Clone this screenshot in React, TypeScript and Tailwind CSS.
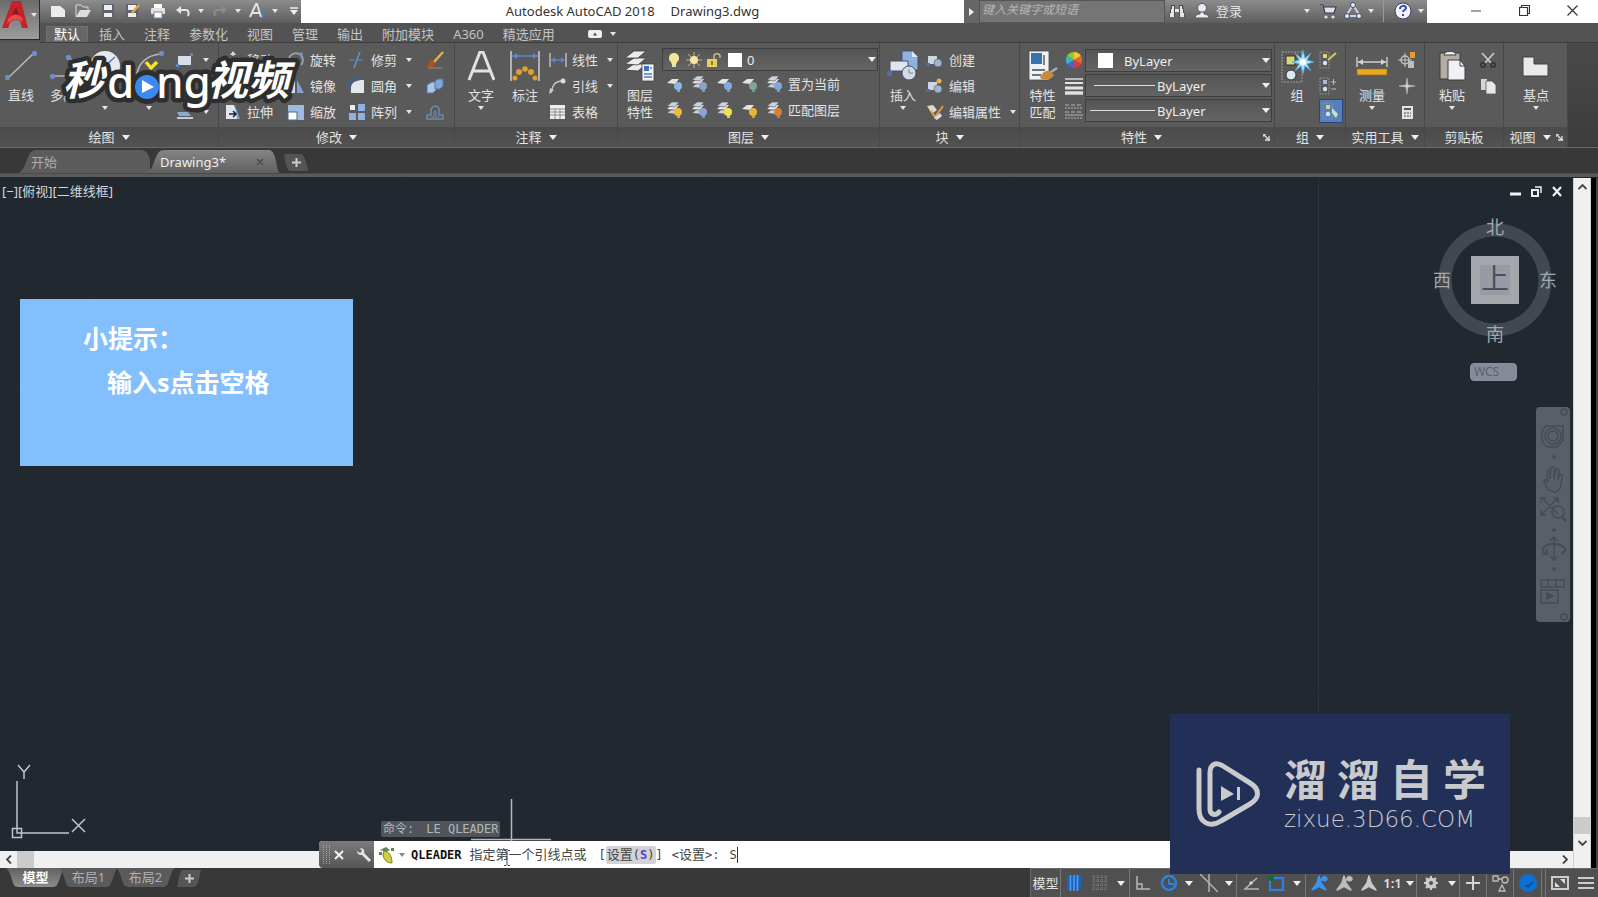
import React from 'react';
import clsx from 'clsx';

interface IconProps {
  w?: number;
  h?: number;
  children: React.ReactNode;
}

const Icon: React.FC<IconProps> = ({ w = 18, h = w, children }) => (
  <svg width={w} height={h} viewBox={`0 0 ${w} ${h}`} fill="none" className="shrink-0" aria-hidden="true">
    {children}
  </svg>
);

const Caret: React.FC<{ big?: boolean }> = ({ big }) =>
  big ? (
    <Icon w={8} h={5}><path d="M0 0h8L4 5z" fill="#eee" /></Icon>
  ) : (
    <Icon w={6} h={4}><path d="M0 0h6L3 4z" fill="#e4e4e4" /></Icon>
  );

// ---------- large ribbon icons ----------
const LineIcon = () => (
  <Icon w={32}>
    <path d="M3 28 29 3" stroke="#b8b8b8" strokeWidth="1.6" />
    <rect x="0" y="25" width="5" height="5" rx="2" fill="#6c8fc9" />
    <rect x="27" y="1" width="5" height="5" rx="2" fill="#6c8fc9" />
  </Icon>
);
const PolylineIcon = () => (
  <Icon w={32}>
    <path d="M5 26h16c8 0 8-16 1-18" stroke="#b8b8b8" strokeWidth="1.6" />
    <rect x="3" y="24" width="5" height="5" rx="2" fill="#6c8fc9" />
    <rect x="19" y="5" width="5" height="5" rx="2" fill="#6c8fc9" />
  </Icon>
);
const CircleIcon = () => (
  <Icon w={32}>
    <circle cx="16" cy="16" r="15" fill="#e6e8ec" />
    <path d="M16 16 26 7" stroke="#5578b5" strokeWidth="1.5" />
    <rect x="14" y="14" width="4" height="4" fill="#5578b5" />
  </Icon>
);
const ArcIcon = () => (
  <Icon w={32}>
    <path d="M3 28C5 13 14 5 28 4" stroke="#b8b8b8" strokeWidth="1.6" />
    <rect x="1" y="26" width="5" height="5" rx="2" fill="#6c8fc9" />
    <rect x="26" y="1" width="5" height="5" rx="2" fill="#6c8fc9" />
  </Icon>
);
const TextIcon = () => (
  <Icon w={28} h={30}>
    <path d="M2 29 13 1h3l11 28M6 20h17" stroke="#e2e2e2" strokeWidth="3" />
  </Icon>
);
const DimensionIcon = () => (
  <Icon w={32}>
    <path d="M2 1v30M30 1v30" stroke="#c9c9c9" strokeWidth="1.6" />
    <path d="M3 6h26" stroke="#5b86cc" strokeWidth="1.6" />
    <path d="m3 6 5-3v6zM29 6l-5-3v6z" fill="#5b86cc" />
    <g fill="#dda02c">
      <circle cx="6" cy="28" r="2.500" /><circle cx="10" cy="22" r="3" /><circle cx="16" cy="19" r="2.800" />
      <circle cx="22" cy="22" r="3" /><circle cx="26" cy="28" r="2.500" />
    </g>
  </Icon>
);
const LayerPropsIcon = () => (
  <Icon w={32}>
    <g fill="#ececec" stroke="#3d3d3d" strokeWidth=".8">
      <path d="m1 20 9-6h12l-8 7z" /><path d="m1 14 9-6h12l-8 7z" /><path d="m1 8 9-7h12l-8 7z" />
    </g>
    <rect x="18" y="14" width="12" height="17" fill="#f1f3f6" stroke="#444" strokeWidth=".8" />
    <rect x="20" y="16" width="5" height="5" fill="#3f70b8" />
    <path d="M20 24h8M20 27h8M26 18h2" stroke="#5a7fb9" strokeWidth="1.4" />
  </Icon>
);
const InsertIcon = () => (
  <Icon w={32}>
    <path d="M15 1h10l6 6v13H15z" fill="#8fb2df" stroke="#43536e" /><path d="M25 1v6h6" fill="#dfe9f6" />
    <path d="M3 11h18v10H3z" fill="#dfe5ee" stroke="#43536e" />
    <circle cx="22" cy="23" r="7" fill="#d3dae5" stroke="#43536e" />
    <path d="M22 23v-4M22 23h4" stroke="#7c8797" />
    <rect x="0" y="21" width="5" height="5" fill="#4b70b2" />
  </Icon>
);
const MatchIcon = () => (
  <Icon w={32}>
    <rect x="2" y="1" width="20" height="29" fill="#f0f1f3" stroke="#4d4d4d" strokeWidth=".8" />
    <rect x="4" y="3" width="11" height="11" fill="#3572b0" />
    <path d="M17 5v10M5 20h13M5 25h9" stroke="#3d4a5b" strokeWidth="1.3" />
    <path d="M13 28c2-6 6-8 10-7l4 4c-3 5-8 6-14 3z" fill="#c98a3d" />
    <path d="m24 22 6-4" stroke="#a9adb3" strokeWidth="2.4" />
  </Icon>
);
const GroupIcon = () => (
  <Icon w={34}>
    <rect x="2" y="3" width="20" height="30" stroke="#9b9b9b" strokeDasharray="2 1" />
    <rect x="6" y="7" width="9" height="9" fill="#d8d775" stroke="#333" />
    <circle cx="11" cy="26" r="5" fill="#dce9ef" stroke="#333" />
    <path d="m23 1 2 8 6-5-4 7 7 2-7 2 4 7-6-5-2 8-2-8-6 5 4-7-7-2 7-2-4-7 6 5z" fill="#a9e0fb" stroke="#4aa3dc" strokeWidth=".8" />
    <circle cx="23" cy="13" r="3" fill="#fff" />
  </Icon>
);
const MeasureIcon = () => (
  <Icon w={32}>
    <path d="M1 7v10M31 7v10M2 12h28" stroke="#d0d0d0" strokeWidth="1.4" />
    <path d="m2 12 5-3v6zM30 12l-5-3v6z" fill="#d0d0d0" />
    <rect x="1" y="19" width="30" height="6" fill="#e8a81f" stroke="#8e6a1c" strokeWidth=".6" />
  </Icon>
);
const PasteIcon = () => (
  <Icon w={30} h={34}>
    <rect x="3" y="4" width="20" height="26" rx="1" fill="#b7aca0" stroke="#3c3c3c" />
    <path d="M7 6c0-5 12-5 12 0z" fill="#ececec" stroke="#3c3c3c" />
    <path d="M11 11h12l5 6v14H11z" fill="#f0f1f4" stroke="#3c3c3c" />
    <path d="M23 11v6h5" stroke="#3c3c3c" />
  </Icon>
);
const BaseIcon = () => (
  <Icon w={30} h={26}>
    <path d="M2 4h11v7h14v12H2z" fill="#e9eaec" stroke="#404040" />
  </Icon>
);

// ---------- small ribbon icons ----------
const RectIcon = () => (
  <Icon><rect x="2" y="5" width="13" height="9" fill="#d8dde6" /><rect x="14" y="2" width="3" height="3" fill="#5d86c8" /><rect x="0" y="13" width="3" height="3" fill="#5d86c8" /></Icon>
);
const EllipseIcon = () => (
  <Icon><ellipse cx="9" cy="9" rx="8" ry="5" stroke="#c8c8c8" strokeWidth="1.5" /><circle cx="9" cy="9" r="2" fill="#5d86c8" /></Icon>
);
const HatchIcon = () => (
  <Icon><path d="M1 9h11l3 4H3z" fill="#8fa7cd" /><path d="M1 15h16" stroke="#c2cde0" strokeWidth="2" /></Icon>
);
const MoveIcon = () => (
  <Icon><path d="M9 2v14M2 9h14" stroke="#c6c6c6" strokeDasharray="3 2" strokeWidth="1.5" /><path d="m9 0 3 4H6zM0 9l4-3v6zM18 9l-4-3v6zM9 18l3-4H6z" fill="#d8d8d8" /></Icon>
);
const CopyIcon = () => (
  <Icon><circle cx="6" cy="6" r="4" stroke="#c8c8c8" strokeWidth="1.5" /><circle cx="12" cy="11" r="4" fill="#7fa1d3" /></Icon>
);
const StretchIcon = () => (
  <Icon><path d="M2 2h8l5 14H2z" fill="#dfe6f0" /><path d="M11 2 16 16h-3z" fill="#7fa1d3" /><path d="M5 11h7M9 8l3 3-3 3" stroke="#222" strokeWidth="1.5" /></Icon>
);
const RotateIcon = () => (
  <Icon><path d="M5 15A7 7 0 1 1 14 14" stroke="#9c9c9c" strokeWidth="2" /><circle cx="14" cy="3" r="2" fill="#6c8fc9" /><circle cx="3" cy="14" r="2" fill="#6c8fc9" /></Icon>
);
const MirrorIcon = () => (
  <Icon><path d="M8 3v13H1z" fill="#d9dce2" /><path d="M10 3v13h7z" fill="#7fa1d3" /></Icon>
);
const ScaleIcon = () => (
  <Icon><rect x="1" y="2" width="16" height="15" fill="#9dbae2" /><rect x="1" y="9" width="9" height="8" fill="#fff" stroke="#536681" /></Icon>
);
const TrimIcon = () => (
  <Icon><path d="M1 9h16" stroke="#4f7cb9" strokeWidth="1.6" strokeDasharray="6 2" /><path d="M12 1 6 17" stroke="#7490b0" strokeWidth="1.6" /></Icon>
);
const FilletIcon = () => (
  <Icon><path d="M3 16V10c1-5 5-7 13-7v13z" fill="#e5e7ea" /><path d="M1 12C1 5 5 1 12 1" stroke="#2d67a8" strokeWidth="1.6" /></Icon>
);
const ArrayIcon = () => (
  <Icon><rect x="2" y="2" width="5" height="5" fill="#eee" /><rect x="10" y="1" width="7" height="7" fill="#8fb1e2" /><rect x="1" y="10" width="7" height="7" fill="#8fb1e2" /><rect x="10" y="10" width="7" height="7" fill="#8fb1e2" /></Icon>
);
const EraseIcon = () => (
  <Icon><path d="M17 1 8 11" stroke="#e8b04a" strokeWidth="2.5" /><path d="m5 8 5 5-5 4-4-1z" fill="#b0501f" /><path d="M2 17h15" stroke="#8c8c8c" /></Icon>
);
const ExplodeIcon = () => (
  <Icon><path d="m1 8 5-3h5v7l-4 4H1z" fill="#a9c6ea" stroke="#56779f" /><path d="M9 4l3-2h5v7l-3 3H9z" fill="#7fa6d8" stroke="#56779f" /></Icon>
);
const OffsetIcon = () => (
  <Icon><path d="M1 16v-4h4V7c1-5 8-5 8 0v5h4v4z" stroke="#6d89ad" strokeWidth="1.5" /><path d="M5 14h8M8 13V8h2v5" stroke="#6d89ad" /></Icon>
);
const LinearIcon = () => (
  <Icon><path d="M1 2v14M17 2v14" stroke="#c9c9c9" strokeWidth="1.3" /><path d="M2 9h14" stroke="#5b86cc" strokeWidth="1.4" /><path d="m2 9 4-3v6zM16 9l-4-3v6z" fill="#5b86cc" /></Icon>
);
const LeaderIcon = () => (
  <Icon><path d="M2 16C4 8 5 5 12 4" stroke="#c9c9c9" strokeWidth="1.4" /><path d="m0 17 1-6 4 2z" fill="#c9c9c9" /><circle cx="14" cy="4" r="2.5" fill="#dcdcdc" /></Icon>
);
const TableIcon = () => (
  <Icon><rect x="1" y="2" width="15" height="14" fill="#ededed" /><path d="M1 6h15M1 9h15M1 12h15M6 6v10M11 6v10" stroke="#8a8a8a" /></Icon>
);

const LayerTool: React.FC<{ dot: string; stack?: boolean }> = ({ dot, stack }) => (
  <Icon>
    <path d="m1 8 5-4h7l-4 5z" fill="#e3e3e3" />
    {stack && <path d="m1 5 5-4h7l-4 5zM1 12l4-3h7l-4 4z" fill="#c9d2df" stroke="#555" strokeWidth=".6" />}
    <circle cx="12" cy="11" r="4" fill={dot} />
    <path d="M11 13h3v4h-3z" fill={dot} opacity=".8" />
  </Icon>
);

const BlockIcon: React.FC<{ accent: string }> = ({ accent }) => (
  <Icon>
    <path d="M2 5h9v8H2z" fill="#ccd6e4" />
    <circle cx="12" cy="12" r="4" fill="#9fb4d3" stroke="#555" strokeWidth=".6" />
    <rect x="0" y="12" width="4" height="3" fill="#4b70b2" />
    <circle cx="13" cy="4" r="2.5" fill={accent} />
  </Icon>
);
const AttrIcon = () => (
  <Icon><path d="m1 3 6-1 4 5-5 4z" fill="#e5d6c4" /><path d="m5 8 4 6 8-11" stroke="#e59b4c" strokeWidth="2" /><path d="m8 15 6-5 2 3-5 4z" fill="#d9dce2" /></Icon>
);
const WheelIcon = () => (
  <Icon>
    <path d="M9 9V1a8 8 0 0 1 7 4z" fill="#f0c92c" /><path d="m9 9 7-4a8 8 0 0 1 0 8z" fill="#e8662e" />
    <path d="m9 9 7 4a8 8 0 0 1-7 4z" fill="#d23c4f" /><path d="M9 9v8a8 8 0 0 1-7-4z" fill="#4c62d6" />
    <path d="m9 9-7 4a8 8 0 0 1 0-8z" fill="#36b7c8" /><path d="M9 9 2 5a8 8 0 0 1 7-4z" fill="#8cc63f" />
  </Icon>
);
const WeightIcon = () => (
  <Icon><path d="M0 2h18" stroke="#e2e2e2" strokeWidth="1.4" /><path d="M0 6h18" stroke="#e2e2e2" strokeWidth="2" /><path d="M0 11h18" stroke="#e2e2e2" strokeWidth="3" /><path d="M0 16h18" stroke="#e2e2e2" strokeWidth="3.4" /></Icon>
);
const TypeIcon = () => (
  <Icon><path d="M0 2h18M0 9h18" stroke="#b5b5b5" strokeDasharray="4 2" /><path d="M0 5h18M0 15h18" stroke="#b5b5b5" strokeDasharray="2 1" /><path d="M0 12h18" stroke="#b5b5b5" /></Icon>
);
const GroupTool: React.FC<{ kind: 'edit' | 'ungroup' | 'select' }> = ({ kind }) => (
  <Icon>
    <rect x="1" y="1" width="9" height="16" stroke="#8f8f8f" strokeDasharray="2 1" />
    <rect x="4" y="3" width="4" height="4" fill={kind === 'ungroup' ? '#a9bcd6' : '#d8d775'} />
    <circle cx="6" cy="12" r="2.2" fill="#d5e4ee" />
    {kind === 'edit' && <path d="m9 9 8-7" stroke="#d5c95a" strokeWidth="2" />}
    {kind === 'ungroup' && <path d="M12 5h5M14.500 2v6M12 12h5" stroke="#bbb" />}
    {kind === 'select' && <path d="m10 6 6 6-2 4-4-5z" fill="#cfe0b4" />}
  </Icon>
);
const QuickSelectIcon = () => (
  <Icon><circle cx="7" cy="9" r="4" stroke="#c4c4c4" strokeWidth="1.5" /><path d="M7 2v14M0 9h14" stroke="#c4c4c4" /><rect x="12" y="1" width="5" height="6" fill="#e69a35" /><rect x="10" y="10" width="6" height="7" fill="#bdbdbd" /></Icon>
);
const PointIcon = () => (
  <Icon><path d="m9 1 1 7 7 1-7 1-1 7-1-7-7-1 7-1z" fill="#d2d2d2" stroke="#bcbcbc" strokeWidth=".6" /></Icon>
);
const CalcIcon = () => (
  <Icon><rect x="4" y="3" width="11" height="13" fill="#e4e4e4" /><path d="M6 6h7" stroke="#555" strokeWidth="2" /><path d="M6 10h7M6 13h7" stroke="#777" strokeWidth="1.4" strokeDasharray="2 1" /></Icon>
);
const CutIcon = () => (
  <Icon><path d="m3 2 9 10M15 2 6 12" stroke="#c9c9c9" strokeWidth="1.8" /><circle cx="4" cy="14" r="2.2" stroke="#333" strokeWidth="1.5" /><circle cx="14" cy="14" r="2.200" stroke="#333" strokeWidth="1.5" /></Icon>
);
const CopyClipIcon = () => (
  <Icon><path d="M2 2h6v11H2z" fill="#d5d5d5" /><path d="M7 4h6l4 4v9H7z" fill="#e8e8e8" stroke="#555" strokeWidth=".8" /></Icon>
);

// ---------- ribbon building blocks ----------
const Panel: React.FC<{
  title: string;
  width: string;
  menu?: boolean;
  launcher?: boolean;
  children: React.ReactNode;
}> = ({ title, width, menu = true, launcher, children }) => (
  <section className={clsx('flex shrink-0 flex-col border-r border-[#484848]', width)}>
    <div className="flex h-[84px] bg-[#5a5a5a] pt-1">{children}</div>
    <div className="flex h-[20px] items-center bg-linear-to-b from-[#4b4b4b] to-[#525252]">
      <button className="flex flex-1 items-center justify-center gap-[7px] leading-[17px]">
        {title}
        {menu && <Caret big />}
      </button>
      {launcher && (
        <button aria-label={`${title} 设置`} className="mr-1">
          <Icon w={7}><path d="M0 0h3M0 0v3M1 1l4 4M6 2v5M2 6h5" stroke="#ddd" strokeWidth="1.3" /></Icon>
        </button>
      )}
    </div>
  </section>
);

const Large: React.FC<{ icon: React.ReactNode; lines?: string[]; name?: string; width: string; menu?: boolean }> = ({
  icon,
  lines,
  name,
  width,
  menu,
}) => (
  <button aria-label={name} className={clsx('flex shrink-0 flex-col items-center whitespace-nowrap leading-[17px]', width)}>
    <span className="mb-[2px] flex h-[38px] items-center">{icon}</span>
    {lines ? lines.map((l) => <span key={l}>{l}</span>) : <span className="h-[17px]" />}
    {menu && <span className="flex h-2 items-center"><Caret /></span>}
  </button>
);

const Small: React.FC<{ icon: React.ReactNode; label?: string; menu?: boolean; name?: string }> = ({
  icon,
  label,
  menu,
  name,
}) => (
  <button aria-label={label ?? name} className="flex h-[26px] items-center gap-[5px] leading-[17px] whitespace-nowrap">
    {icon}
    {label}
    {menu && <span className="ml-1"><Caret /></span>}
  </button>
);

const Combo: React.FC<{ label: string; value: string; children?: React.ReactNode }> = ({ label, value, children }) => (
  <label className="flex h-[23px] items-center border border-[#3e3e3e] bg-linear-to-b from-[#555] to-[#646464] pr-px">
    {children}
    <select aria-label={label} className="min-w-0 flex-1 appearance-none bg-transparent text-[#eee] outline-none">
      <option>{value}</option>
    </select>
    <Caret big />
  </label>
);

const layerRows = [
  { label: '置为当前', tools: [['关', '#8fb6dd', 0], ['隔离', '#8aa3c2', 1], ['冻结', '#86a8e0', 0], ['锁定', '#7fa596', 0], ['当前', '#7fa8d8', 1]] },
  { label: '匹配图层', tools: [['打开', '#f0b840', 1], ['取消隔离', '#8aa3d2', 1], ['解冻', '#f3de4d', 1], ['解锁', '#e5b43a', 0], ['匹配', '#cf8238', 1]] },
] as const;

const Ribbon = () => (
  <div className="flex h-[105px] overflow-hidden border-b border-[#6a6a6a] bg-linear-to-b from-[#4a4a4a] to-[#3c3c3c]">
    <Panel title="绘图" width="w-[219px]">
      <Large width="w-[42px]" icon={<LineIcon />} lines={['直线']} />
      <Large width="w-[42px]" icon={<PolylineIcon />} lines={['多段']} />
      <Large width="w-[42px]" icon={<CircleIcon />} name="圆" menu />
      <Large width="w-[46px]" icon={<ArcIcon />} name="圆弧" menu />
      <div className="pl-1">
        <Small name="矩形" icon={<RectIcon />} menu />
        <Small name="椭圆" icon={<EllipseIcon />} menu />
        <Small name="图案填充" icon={<HatchIcon />} menu />
      </div>
    </Panel>
    <Panel title="修改" width="w-[236px]">
      <div className="grid grid-cols-[63px_61px_78px_auto] content-start pl-[5px]">
        <Small icon={<MoveIcon />} label="移动" />
        <Small icon={<RotateIcon />} label="旋转" />
        <Small icon={<TrimIcon />} label="修剪" menu />
        <Small icon={<EraseIcon />} name="删除" />
        <Small icon={<CopyIcon />} name="复制" />
        <Small icon={<MirrorIcon />} label="镜像" />
        <Small icon={<FilletIcon />} label="圆角" menu />
        <Small icon={<ExplodeIcon />} name="分解" />
        <Small icon={<StretchIcon />} label="拉伸" />
        <Small icon={<ScaleIcon />} label="缩放" />
        <Small icon={<ArrayIcon />} label="阵列" menu />
        <Small icon={<OffsetIcon />} name="偏移" />
      </div>
    </Panel>
    <Panel title="注释" width="w-[163px]">
      <Large width="w-[52px]" icon={<TextIcon />} lines={['文字']} menu />
      <Large width="w-[36px]" icon={<DimensionIcon />} lines={['标注']} />
      <div className="pl-[6px]">
        <Small icon={<LinearIcon />} label="线性" menu />
        <Small icon={<LeaderIcon />} label="引线" menu />
        <Small icon={<TableIcon />} label="表格" />
      </div>
    </Panel>
    <Panel title="图层" width="w-[262px]">
      <Large width="w-[44px]" icon={<LayerPropsIcon />} lines={['图层', '特性']} />
      <div className="min-w-0 flex-1 pt-px pr-px">
        <Combo label="图层" value="0">
          <span className="mr-[5px] flex items-center gap-[3px] pl-[3px]">
            <Icon w={16}><path d="M8 1a5 5 0 0 0-3 9l1 3h4l1-3a5 5 0 0 0-3-9z" fill="#f8e49a" /><path d="M6 13h4v2H6z" fill="#d8d8d8" /></Icon>
            <Icon><path d="M9 1v16M1 9h16M3 3l12 12M15 3 3 15" stroke="#c7b48a" /><circle cx="9" cy="9" r="4" fill="#f8e6a4" /></Icon>
            <Icon w={16}><rect x="1" y="7" width="10" height="8" fill="#e9cf62" /><path d="M8 7V4c0-3 6-3 6 0v2" stroke="#c6b878" strokeWidth="1.5" /><path d="M6 9v4" stroke="#6a5a20" strokeWidth="1.5" /></Icon>
            <span className="ml-[3px] h-[14px] w-[14px] bg-white" />
          </span>
        </Combo>
        {layerRows.map((row) => (
          <div key={row.label} className="flex h-[26px] items-center gap-1 pl-1">
            <div className="flex gap-[7px]">
              {row.tools.map(([name, dot, stack]) => (
                <button key={name} aria-label={name}><LayerTool dot={dot} stack={!!stack} /></button>
              ))}
            </div>
            <button>{row.label}</button>
          </div>
        ))}
      </div>
    </Panel>
    <Panel title="块" width="w-[140px]">
      <Large width="w-[46px]" icon={<InsertIcon />} lines={['插入']} menu />
      <div>
        <Small icon={<BlockIcon accent="#5a5a5a" />} label="创建" />
        <Small icon={<BlockIcon accent="#e8b33c" />} label="编辑" />
        <Small icon={<AttrIcon />} label="编辑属性" menu />
      </div>
    </Panel>
    <Panel title="特性" width="w-[255px]" launcher>
      <Large width="w-[45px]" icon={<MatchIcon />} lines={['特性', '匹配']} />
      <div className="w-5">
        <Small icon={<WheelIcon />} name="对象颜色" />
        <Small icon={<WeightIcon />} name="线宽" />
        <Small icon={<TypeIcon />} name="线型" />
      </div>
      <div className="flex min-w-0 flex-1 flex-col gap-[2px] pt-[2px] pr-[2px]">
        <Combo label="对象颜色" value="ByLayer"><span className="mr-[11px] ml-3 h-[15px] w-[15px] bg-white" /></Combo>
        <Combo label="线宽" value="ByLayer"><span className="mr-[2px] ml-2 h-px w-[61px] bg-[#ddd]" /></Combo>
        <Combo label="线型" value="ByLayer"><span className="mr-[2px] ml-1 h-px w-[65px] bg-[#ddd]" /></Combo>
      </div>
    </Panel>
    <Panel title="组" width="w-[71px]">
      <Large width="w-[44px]" icon={<GroupIcon />} lines={['组']} />
      <div>
        <Small icon={<GroupTool kind="edit" />} name="组编辑" />
        <Small icon={<GroupTool kind="ungroup" />} name="解除编组" />
        <button aria-label="组选择" className="flex h-6 w-6 items-center justify-center border border-[#28467c] bg-[#5580bd]">
          <GroupTool kind="select" />
        </button>
      </div>
    </Panel>
    <Panel title="实用工具" width="w-[79px]">
      <Large width="w-[52px]" icon={<MeasureIcon />} lines={['测量']} menu />
      <div>
        <Small icon={<QuickSelectIcon />} name="快速选择" />
        <Small icon={<PointIcon />} name="点坐标" />
        <Small icon={<CalcIcon />} name="计算器" />
      </div>
    </Panel>
    <Panel title="剪贴板" width="w-[79px]" menu={false}>
      <Large width="w-[54px]" icon={<PasteIcon />} lines={['粘贴']} menu />
      <div>
        <Small icon={<CutIcon />} name="剪切" />
        <Small icon={<CopyClipIcon />} name="复制" />
      </div>
    </Panel>
    <Panel title="视图" width="w-[64px]" launcher>
      <Large width="w-[64px]" icon={<BaseIcon />} lines={['基点']} menu />
    </Panel>
  </div>
);

// ---------- title bar ----------
const Quick: React.FC<{ name: string; narrow?: boolean; children: React.ReactNode }> = ({ name, narrow, children }) => (
  <button aria-label={name} className={clsx('flex h-[21px] items-center justify-center', narrow ? 'w-3' : 'w-[25px]')}>
    {children}
  </button>
);

const TitleBar = () => (
  <div className="flex h-[23px] bg-linear-to-b from-[#8c8c8c] to-[#5e5e5e]">
    <div className="flex items-start pr-[3px] pl-[5px]">
      <Quick name="新建"><Icon w={16}><path d="M1 3h9l5 4v7H1z" fill="#ececec" /></Icon></Quick>
      <Quick name="打开"><Icon w={16}><path d="M1 14V2h5l2 2h5v3" stroke="#ddd" fill="#777" /><path d="M1 14 5 7h11l-4 7z" fill="#ddd" /></Icon></Quick>
      <Quick name="保存"><Icon w={16}><rect x="2" y="1" width="12" height="14" rx="1" fill="#5d6470" /><rect x="4" y="2" width="8" height="5" fill="#eee" /><rect x="4" y="10" width="8" height="4" fill="#eee" /></Icon></Quick>
      <Quick name="另存为"><Icon w={16}><rect x="1" y="1" width="12" height="14" rx="1" fill="#5d6470" /><rect x="3" y="2" width="8" height="5" fill="#eee" /><rect x="3" y="10" width="8" height="4" fill="#eee" /><path d="m7 10 7-8" stroke="#e2a546" strokeWidth="2.500" /></Icon></Quick>
      <Quick name="打印"><Icon w={16}><rect x="4" y="1" width="8" height="4" fill="#fff" /><rect x="1" y="5" width="14" height="6" rx="1" fill="#e4e4e4" /><rect x="4" y="9" width="8" height="6" fill="#fff" stroke="#6e87ad" /></Icon></Quick>
      <Quick name="放弃"><Icon w={16}><path d="M3 7h8c3 0 3 4 2 6" stroke="#e6e6e6" strokeWidth="2" /><path d="M1 7l5-4v8z" fill="#e6e6e6" /></Icon></Quick>
      <Quick name="放弃列表" narrow><Caret /></Quick>
      <Quick name="重做"><Icon w={16}><path d="M13 7H5c-3 0-3 4-2 6" stroke="#8b8b8b" strokeWidth="2" /><path d="m15 7-5-4v8z" fill="#8b8b8b" /></Icon></Quick>
      <Quick name="重做列表" narrow><Caret /></Quick>
      <Quick name="A360"><Icon><path d="M2 15 8 2h1l4 13M4 11h7" stroke="#e2e2e2" strokeWidth="2" /><path d="M13 9c4 1 4 6 0 7" stroke="#4b7fd0" strokeWidth="1.5" /></Icon></Quick>
      <Quick name="A360 列表" narrow><Caret /></Quick>
      <button aria-label="自定义快速访问工具栏" className="flex h-[21px] w-[17px] items-center justify-end">
        <Icon w={8}><path d="M0 1h8" stroke="#eee" strokeWidth="1.5" /><path d="M0 3h8L4 8z" fill="#eee" /></Icon>
      </button>
    </div>
    <h1 className="flex flex-1 items-start justify-center gap-4 overflow-hidden bg-white leading-[22px] whitespace-nowrap text-[#333]">
      <span>Autodesk AutoCAD 2018</span>
      <span>Drawing3.dwg</span>
    </h1>
    <button aria-label="展开搜索" className="flex w-[15px] items-center justify-center bg-[#666]">
      <Icon w={5} h={8}><path d="M0 0v8l5-4z" fill="#eee" /></Icon>
    </button>
    <input
      aria-label="搜索"
      placeholder="键入关键字或短语"
      className="w-[186px] border border-[#555] bg-[#757575] pb-[3px] pl-[2px] text-[12px] text-[#eee] italic outline-none placeholder:text-[#b5b5b5]"
    />
    <div className="flex items-start">
      <Quick name="查找"><Icon><path d="M3 3h4v12H1zM11 3h4l2 12h-6z" fill="#4a4d55" /><path d="M4 4h2v3H4zM12 4h2v3h-2zM2 11h4v4H2zM12 11h4v4h-4zM7 7h4v3H7zM3 7h3v4H3zM12 7h3v4h-3z" fill="#e6e6e6" /></Icon></Quick>
      <button className="flex h-[21px] items-center gap-[5px] pl-[3px]">
        <Icon w={18}><circle cx="9" cy="6" r="4.500" fill="#e8eaf0" stroke="#54596a" /><path d="M2 16c0-3 3-4 5-4v-2h4v2c2 0 5 1 5 4z" fill="#e8eaf0" stroke="#54596a" /></Icon>
        登录
      </button>
      <span className="ml-[59px]"><Quick name="登录列表" narrow><Caret /></Quick></span>
      <span className="ml-[2px]"><Quick name="商店"><Icon><path d="M1 3h3l2 8h9l2-6H5" fill="#dfe2ec" stroke="#333a55" strokeWidth="1.2" /><circle cx="7" cy="15" r="1.600" fill="#dfe2ec" /><circle cx="14" cy="15" r="1.600" fill="#dfe2ec" /></Icon></Quick></span>
      <Quick name="Autodesk App"><Icon><path d="M9 3 2 14h14z" stroke="#c9d2ee" strokeWidth="2" /><circle cx="9" cy="3" r="2.500" fill="#e8ecf8" stroke="#39466e" /><circle cx="3" cy="14" r="2.500" fill="#e8ecf8" stroke="#39466e" /><circle cx="15" cy="14" r="2.500" fill="#e8ecf8" stroke="#39466e" /></Icon></Quick>
      <Quick name="应用列表" narrow><Caret /></Quick>
      <span className="mx-1.5 h-[22px] w-px bg-[#999]" />
      <Quick name="帮助"><Icon><circle cx="9" cy="9" r="8" fill="#f2f4fa" stroke="#33406e" /><path d="M6 7c0-4 6-4 6-1 0 2-3 2-3 4M9 12v2" stroke="#2c4fae" strokeWidth="2" /></Icon></Quick>
      <Quick name="帮助列表" narrow><Caret /></Quick>
    </div>
    <div className="flex w-[171px] justify-end bg-white pr-[2px] pb-[2px]">
      <button aria-label="最小化" className="flex w-12 items-center justify-center"><Icon w={10}><path d="M0 5h10" stroke="#444" /></Icon></button>
      <button aria-label="还原" className="flex w-12 items-center justify-center"><Icon w={11}><path d="M.5 2.500h8v8h-8zM2.500 2V.5h8v8H9" stroke="#333" strokeWidth="1.2" /></Icon></button>
      <button aria-label="关闭" className="flex w-12 items-center justify-center"><Icon w={11}><path d="m.5.5 10 10M10.500.5l-10 10" stroke="#333" strokeWidth="1.2" /></Icon></button>
    </div>
  </div>
);

const ribbonTabs = ['默认', '插入', '注释', '参数化', '视图', '管理', '输出', '附加模块', 'A360', '精选应用'];

const Header = () => (
  <header className="flex bg-[#535353]">
    <button aria-label="应用程序菜单" className="flex h-10 w-10 items-center justify-center gap-[3px] self-start border-r border-b border-[#2b2b2b] bg-linear-to-b from-[#6c6c6c] to-[#9d9d9d] pb-[9px]">
      <Icon w={26} h={30}>
        <path d="M0 28 10 1h9l7 27h-6l-2-7c-4-2-8-1-10 2l-2 5z" fill="#c4232b" />
        <path d="m10 15 4-8 3 8c-2-1-5-1-7 0z" fill="#8d1a20" />
        <path d="M6 19c4-5 10-6 14-1l1 4c-5-4-11-3-16 2z" fill="#ea4a4c" />
      </Icon>
      <Caret />
    </button>
    <div className="min-w-0 flex-1">
      <TitleBar />
      <nav className="flex h-5 items-end gap-[19px] border-b border-[#3e3e3e] pl-[14px] leading-[15px] whitespace-nowrap text-[#c4c4c4]">
        {ribbonTabs.map((t, i) => (
          <button key={t} className={clsx(i === 0 && '-mx-2 border-x border-t border-[#707070] bg-[#666] px-[7px] text-white')}>
            {t}
          </button>
        ))}
        <button aria-label="最小化功能区" className="mb-1 ml-[14px] flex items-center gap-2">
          <Icon w={14} h={8}><rect width="14" height="8" rx="2" fill="#eee" /><path d="M5 5.500h4L7 2.500z" fill="#444" /></Icon>
          <Caret />
        </button>
      </nav>
    </div>
  </header>
);

const FileTabs = () => (
  <div className="border-b border-[#23262b] bg-[#383838]">
    <div className="flex h-[26px] items-end border-b border-[#4a4a4a] pl-[18px]">
      <button className="h-[23px] w-[132px] bg-[#5c5c5c] pl-[13px] text-left text-[#adadad] [clip-path:path('M0_23C6_22_8_10_11_5C13_1_15_0_20_0H122C128_0_131_4_132_10V23Z')]">
        开始
      </button>
      <div className="-ml-1 flex h-[23px] w-[134px] items-center bg-linear-to-b from-[#858585] to-[#606060] pl-[14px] text-[#f0f0f0] [clip-path:path('M0_23C6_22_8_10_11_5C13_1_15_0_20_0H122C126_0_127_2_129_7C131_14_131_22_134_23Z')]">
        <button className="flex-1 text-left">Drawing3*</button>
        <button aria-label="关闭 Drawing3" className="mr-4">
          <Icon w={8}><path d="m1 1 6 6M7 1 1 7" stroke="#4d4d4d" strokeWidth="1.5" /></Icon>
        </button>
      </div>
      <button aria-label="新图形" className="mb-[2px] ml-1 flex h-[17px] w-6 items-center justify-center bg-[#555] [clip-path:path('M0_0H16C20_0_22_6_24_17H6C3_17_1_8_0_0Z')]">
        <Icon w={9}><path d="M4.500 0v9M0 4.500h9" stroke="#ccc" strokeWidth="2" /></Icon>
      </button>
    </div>
    <div className="h-[3px] bg-[#5a5a5a]" />
  </div>
);

// ---------- drawing area ----------
const ViewCube = () => (
  <svg className="absolute top-[37px] right-[13px]" width="130" height="130" viewBox="0 0 130 130">
    <circle cx="65" cy="65" r="50" fill="none" stroke="#424852" strokeWidth="13" />
    <rect x="41" y="41" width="48" height="48" fill="#a3a7ab" />
    <rect x="50" y="50" width="30" height="30" fill="#969ba5" />
    <g fill="#a4a8ac" fontSize="18" textAnchor="middle">
      <text x="65" y="19">北</text>
      <text x="65" y="126">南</text>
      <text x="12" y="72">西</text>
      <text x="118" y="72">东</text>
    </g>
    <text x="65" y="74" fontSize="28" textAnchor="middle" fill="#4b4f57">上</text>
  </svg>
);

const NavBar = () => (
  <div className="absolute top-[229px] right-[3px] w-[34px] rounded-sm bg-[#5a5e66]">
    <svg width="34" height="215" viewBox="0 0 34 215" fill="none" stroke="#464b55" strokeWidth="1.5" aria-label="导航栏">
      <circle cx="28" cy="5" r="3" /><circle cx="28" cy="210" r="3" />
      <path d="M10 19h17v14l-6 7H12c-8-3-8-16-2-21z" /><circle cx="17" cy="29" r="8" /><circle cx="17" cy="29" r="5" />
      <path d="M16 49h4l-2 3zM16 122h4l-2 3zM16 161h4l-2 3z" fill="#464b55" strokeWidth="1" />
      <path d="M12 83 8 74c0-2 2-2 4 1l-1-11c1-2 3-1 3 1v7l1-11c1-2 3-1 3 1v10l2-10c1-1 3 0 3 2l-1 9 2-6c2 0 2 2 2 3l-1 7c0 4-3 8-6 8z" />
      <path d="m6 91 16 16M22 91 6 107M5 96v-5h5M18 91h4v5M5 103v5h5" /><circle cx="22" cy="105" r="6" /><path d="m26 110 4 4" strokeWidth="2.500" />
      <path d="M18 130v23M14 134l4-4 4 4M14 149l4 4 4-4" /><path d="M10 147c-8-5 0-10 8-10s16 5 7 10M6 147h5v-5" strokeWidth="2" />
      <path d="M5 173h23v7H5zM12 173v7M20 173v7M5 183h17v13H5z" /><path d="m11 186 6 3-6 3z" fill="#464b55" />
    </svg>
  </div>
);

const CommandLine = () => (
  <div className="absolute right-[80px] -bottom-[17px] left-[319px] flex h-[27px] overflow-hidden rounded-l-sm bg-white">
    <div className="flex w-[55px] items-center bg-linear-to-b from-[#7b7b7b] to-[#555] pl-[3px]">
      <Icon w={8} h={20}><path d="M1.500 0v20M4.500 0v20M7.500 0v20" stroke="#a5a5a5" strokeDasharray="1 1" /></Icon>
      <button aria-label="关闭命令行" className="ml-1"><Icon w={10}><path d="m1 1 8 8M9 1 1 9" stroke="#f2f2f2" strokeWidth="2" /></Icon></button>
      <button aria-label="自定义" className="ml-3"><Icon w={16}><path d="M6 6 14 14" stroke="#e2e2e2" strokeWidth="3" /><path d="M1 4c0 4 4 5 7 3 1-3 0-6-4-6l2 3-2 2z" fill="#e2e2e2" /></Icon></button>
    </div>
    <label className="flex min-w-0 flex-1 items-center pl-1 font-['DejaVu_Sans_Mono','Noto_Sans_CJK_SC',monospace] text-[12px] whitespace-pre text-[#444]">
      <Icon w={18}><path d="m2 4 6-3 4 3-4 2z" fill="#5b8b6b" /><path d="M6 5c5 0 8 5 8 12-5 0-8-3-9-8z" fill="#cfcf3a" stroke="#7c7a21" /><path d="M13 2h3v3h-3zM1 6h3v3H1z" fill="#6f7b4e" /></Icon>
      <span className="mr-[6px] ml-[3px]"><Icon w={6} h={4}><path d="M0 0h6L3 4z" fill="#888" /></Icon></span>
      <b className="mr-2 text-[#111]">QLEADER</b>
      <span className="text-[13px]">指定第一个引线点或</span>
      <span className="ml-3">[</span>
      <button className="rounded-xs bg-[#d3d3d6] px-px leading-[17px]"><span className="text-[13px]">设置</span>(<b className="text-[#4a3fd6]">S</b>)</button>
      <span>]</span>
      <span className="ml-[9px]">&lt;</span><span className="text-[13px]">设置</span><span>&gt;:</span>
      <input aria-label="命令" defaultValue="S" className="ml-[10px] w-2 bg-transparent text-[#444] outline-none" />
      <span className="h-4 w-px bg-[#333]" />
    </label>
  </div>
);

const Canvas = () => (
  <div className="relative min-h-0 flex-1 bg-[#212830]">
    <svg className="absolute inset-0 h-full w-full" stroke="#242b34" aria-hidden="true">
      <path d="M95.500 0v900M401.500 0v900M706.500 0v900M1012.500 0v900" />
      <path d="M1318.500 0v900" stroke="#2e353f" />
      <path d="M0 210.500h1573M0 517.500h1573" />
    </svg>
    <p className="absolute top-1 left-[2px] leading-[18px] text-[#d4d6d9]">[−][俯视][二维线框]</p>
    <div className="absolute top-2 right-[10px] flex items-center gap-[10px]">
      <button aria-label="最小化视口"><Icon w={11}><path d="M0 8h11" stroke="#f2f2f2" strokeWidth="3" /></Icon></button>
      <button aria-label="还原视口"><Icon w={11}><path d="M1 4h6v6H1z" stroke="#eee" strokeWidth="2" /><path d="M4 1h6v6" stroke="#eee" strokeWidth="1.500" /></Icon></button>
      <button aria-label="关闭视口"><Icon w={11}><path d="m1 1 8 9M9 1 1 10" stroke="#f2f2f2" strokeWidth="2.200" /></Icon></button>
    </div>

    <aside className="absolute top-[121px] left-[20px] h-[167px] w-[333px] bg-[#84bffd] pt-[17px] pl-[63px] text-[25px] leading-[44px] font-bold text-white">
      <p>小提示：</p>
      <p className="pl-6">输入s点击空格</p>
    </aside>

    <ViewCube />
    <button className="absolute top-[185px] right-[56px] h-[18px] w-[47px] rounded-[4px] border border-[#8b909c] bg-[#868b99] pl-[3px] text-left text-[12px] leading-[16px] text-[#5c616d]">
      WCS
    </button>
    <NavBar />

    {/* UCS icon */}
    <svg className="absolute bottom-[7px] left-[10px]" width="80" height="86" viewBox="0 0 80 86" fill="none" stroke="#bfc4ca" strokeWidth="1.5">
      <path d="M7 23v52h52M2.500 70.500h9v9h-9z" />
      <path d="m8 7 6 7 6-7M14 14v7M62 61l13 13M75 61 62 74" />
    </svg>

    {/* crosshair */}
    <svg className="absolute bottom-[10px] left-[471px]" width="80" height="42" viewBox="0 0 80 42" stroke="#b5b8bc" aria-hidden="true">
      <path d="M40.500 0v42M0 40.500h80" strokeWidth="1.5" />
    </svg>
    <p className="absolute bottom-[14px] left-[381px] flex h-4 gap-3 rounded-xs bg-[#50555b] px-[2px] font-['DejaVu_Sans_Mono','Noto_Sans_CJK_SC',monospace] text-[12px] leading-4 whitespace-nowrap text-[#b4b7ba]">
      <span>命令:</span>
      <span>LE QLEADER</span>
    </p>
    <CommandLine />
    <svg className="absolute -bottom-[15px] left-[502px]" width="10" height="16" viewBox="0 0 10 16" fill="none" stroke="#444" aria-hidden="true">
      <path d="M2 .5h2l1 1 1-1h2M5 1.500v13M2 15.500h2l1-1 1 1h2" />
    </svg>
  </div>
);

const Workspace = () => (
  <main className="flex min-h-0 flex-1">
    <div className="flex min-w-0 flex-1 flex-col">
      <Canvas />
      <div className="flex h-[17px] items-center justify-between bg-[#f0f0f0]">
        <div className="flex h-full items-center">
          <button aria-label="向左滚动" className="flex w-[17px] justify-center"><Icon w={6} h={9}><path d="M5 .5 1 4.500l4 4" stroke="#444" strokeWidth="1.800" /></Icon></button>
          <span className="h-full w-[17px] bg-[#cbcbcb]" />
        </div>
        <button aria-label="向右滚动" className="flex w-[17px] justify-center"><Icon w={6} h={9}><path d="m1 .5 4 4-4 4" stroke="#444" strokeWidth="1.800" /></Icon></button>
      </div>
    </div>
    <div className="flex w-[18px] flex-col items-center justify-between border-x border-[#cfcfcf] bg-[#f0f0f0] pb-[17px]">
      <button aria-label="向上滚动" className="flex h-[17px] items-center"><Icon w={9} h={6}><path d="m.5 5 4-4 4 4" stroke="#444" strokeWidth="1.800" /></Icon></button>
      <div className="w-full">
        <span className="block h-[17px] bg-[#cbcbcb]" />
        <button aria-label="向下滚动" className="flex h-[17px] w-full items-center justify-center"><Icon w={9} h={6}><path d="m.5 1 4 4 4-4" stroke="#444" strokeWidth="1.800" /></Icon></button>
      </div>
    </div>
    <div className="w-[7px] border-r-2 border-[#444] bg-black" />
  </main>
);

// ---------- status bar ----------
const LayoutTab: React.FC<{ label: string; active?: boolean }> = ({ label, active }) => (
  <button
    className={clsx(
      "h-[19px] w-[59px] leading-[19px] [clip-path:path('M0_0H59C55_3_55_9_52_15C51_18_49_19_46_19H13C10_19_8_18_7_15C5_9_4_3_0_0Z')]",
      active ? 'bg-linear-to-b from-[#626262] to-[#8c8c8c] font-bold text-white' : 'bg-[#5b5b5b] text-[#b0b0b0]',
    )}
  >
    {label}
  </button>
);

const St: React.FC<{ name: string; w: string; end?: boolean; children: React.ReactNode }> = ({ name, w, end, children }) => (
  <button aria-label={name} className={clsx('flex h-full items-center justify-center', w, end && 'border-r border-[#787878]')}>
    {children}
  </button>
);

const Person: React.FC<{ color: string; spark?: boolean }> = ({ color, spark }) => (
  <Icon>
    <path d="M9 2 7 9l-5 7 6-3 1-2 1 2 6 3-5-7z" fill={color} stroke={color} strokeWidth="1.5" strokeLinejoin="round" />
    {spark && <path d="M11 6c0-4 5-5 6-2s-2 4-6 2z" fill={color} stroke={color} />}
  </Icon>
);

const StatusBar = () => (
  <footer className="flex h-[29px] justify-between bg-[#383838]">
    <div className="flex pl-[6px]">
      <LayoutTab label="模型" active />
      <div className="-ml-[6px]"><LayoutTab label="布局1" /></div>
      <div className="-ml-[2px]"><LayoutTab label="布局2" /></div>
      <button aria-label="新建布局" className="mt-[2px] ml-[2px] flex h-[17px] w-6 items-center justify-center bg-[#565656] [clip-path:path('M5_0H24C22_9_21_17_16_17H0C2_10_2_3_5_0Z')]">
        <Icon w={9}><path d="M4.500 0v9M0 4.500h9" stroke="#ccc" strokeWidth="2" /></Icon>
      </button>
    </div>
    <div className="flex h-full items-center border-t border-l border-[#6a6a6a] bg-[#505050] whitespace-nowrap">
      <St name="模型空间" w="w-[30px]" end><span>模型</span></St>
      <St name="栅格" w="w-[26px]"><Icon w={16}><rect x="1" y="1" width="14" height="14" fill="#1f63b8" /><path d="M4.500 0v16M8 0v16M11.500 0v16" stroke="#4fa0f2" strokeWidth="1.5" /></Icon></St>
      <St name="捕捉" w="w-[26px]"><Icon w={16}><path d="M2 0v16M6 0v16M10 0v16M14 0v16M0 2h16M0 6h16M0 10h16M0 14h16" stroke="#858585" strokeDasharray="1 1" /></Icon></St>
      <St name="捕捉列表" w="w-[17px]" end><Caret big /></St>
      <St name="正交" w="w-[26px]"><Icon w={14}><path d="M1 0v13h13M1 8h5v5" stroke="#b5b5b5" strokeWidth="1.500" /></Icon></St>
      <St name="极轴" w="w-[25px]"><Icon><circle cx="9" cy="9" r="7" stroke="#2a82e4" strokeWidth="2.500" /><path d="M9 5v5h5" stroke="#2a82e4" strokeWidth="2" /></Icon></St>
      <St name="极轴列表" w="w-4"><Caret big /></St>
      <St name="等轴测" w="w-6"><Icon w={18}><path d="m0 0 18 18M9 0v18" stroke="#b0b0b0" strokeWidth="1.500" /></Icon></St>
      <St name="等轴测列表" w="w-4" end><Caret big /></St>
      <St name="对象追踪" w="w-7"><Icon w={16}><path d="M14 3 2 14h14" stroke="#b5b5b5" strokeWidth="1.500" /><circle cx="8" cy="8" r="1.800" fill="#ccc" /></Icon></St>
      <St name="对象捕捉" w="w-6"><Icon w={18}><rect x="2" y="4" width="13" height="12" stroke="#2a82e4" strokeWidth="2.200" /><circle cx="3" cy="4" r="3" fill="#146b2c" /></Icon></St>
      <St name="捕捉设置" w="w-[17px]" end><Caret big /></St>
      <St name="注释可见性" w="w-[25px]"><Person color="#3b93f0" spark /></St>
      <St name="自动缩放" w="w-[25px]"><Person color="#bdbdbd" spark /></St>
      <St name="注释比例" w="w-[25px]"><Person color="#c8c8c8" /></St>
      <button className="flex h-full w-9 items-center justify-center gap-1 border-r border-[#787878] font-semibold">1:1<Caret big /></button>
      <St name="工作空间" w="w-[27px]"><Icon w={14}><circle cx="7" cy="7" r="4" stroke="#ccc" strokeWidth="3" /><path d="M7 0v14M0 7h14M2 2l10 10M12 2 2 12" stroke="#ccc" strokeWidth="2" /><circle cx="7" cy="7" r="2" fill="#505050" /></Icon></St>
      <St name="工作空间列表" w="w-4" end><Caret big /></St>
      <St name="注释监视器" w="w-[27px]" end><Icon w={14}><path d="M7 0v14M0 7h14" stroke="#d5d5d5" strokeWidth="2" /></Icon></St>
      <St name="隔离对象" w="w-[27px]" end><Icon w={18}><path d="M2 2h5v5H2zM8 17l3-6 3 6zM7 5h4" stroke="#bbb" strokeWidth="1.300" /><circle cx="14" cy="6" r="3" stroke="#bbb" strokeWidth="1.300" /></Icon></St>
      <St name="硬件加速" w="w-7" end><Icon w={20}><circle cx="10" cy="10" r="9" fill="#0f6fd0" /><path d="m8 12 2 2 5-5" stroke="#0a4c93" strokeWidth="1.500" /></Icon></St>
      <span className="h-full w-1 border-r border-[#787878]" />
      <St name="全屏" w="w-7"><Icon w={18}><rect x="1" y="3" width="16" height="12" fill="#555" stroke="#ccc" strokeWidth="2" /><path d="M4 13V8l5 5zM14 5v5L9 5z" fill="#ddd" /></Icon></St>
      <St name="自定义状态栏" w="w-6"><Icon w={16}><path d="M0 3h16M0 8h16M0 13h16" stroke="#ccc" strokeWidth="2" /></Icon></St>
    </div>
  </footer>
);

// ---------- overlay logos ----------
const VideoLogo = () => (
  <svg
    className="pointer-events-none absolute top-[50px] left-[50px] overflow-visible font-['Noto_Sans','Noto_Sans_CJK_SC',sans-serif]"
    width="260"
    height="70"
    viewBox="0 0 260 70"
    fill="#fff"
    stroke="#2e2e2e"
    strokeWidth="9"
    strokeLinejoin="round"
    fontWeight="500"
    paintOrder="stroke"
  >
    <circle cx="97" cy="37" r="17" fill="#2e2e2e" stroke="none" />
    <text x="13" y="45" fontSize="41" fontStyle="italic" fontWeight="600">秒</text>
    <text x="157" y="45" fontSize="41" fontStyle="italic" fontWeight="600">视频</text>
    <text x="57" y="48" fontSize="44">d</text>
    <text x="106" y="48" fontSize="44">ng</text>
    <circle cx="97" cy="37" r="12" fill="#3b8af2" stroke="none" />
    <path d="M92 30v13l12-6z" stroke="none" />
    <path d="m96 12 5 6 6-6" fill="none" stroke="#f7e12c" strokeWidth="3.500" />
  </svg>
);

const BrandCard = () => (
  <div className="absolute right-[88px] bottom-[23px] flex h-[160px] w-[340px] items-center bg-[#222f56] pl-[26px] text-[#c9cacc]">
    <Icon w={66} h={68}>
      <path d="M3 10v39c0 14 11 19 22 12l29-17c10-6 10-15 0-21L27 6c-8-5-13-1-13 7v36c0 6 6 7 9 3" stroke="#c9cacc" strokeWidth="5" strokeLinecap="round" strokeLinejoin="round" />
      <path d="M25 26v15l13-7zM41 27h3v13h-3z" fill="#c9cacc" />
    </Icon>
    <div className="ml-[22px]">
      <p className="flex gap-[10px] text-[43px] leading-[50px] font-bold">
        <span>溜</span><span>溜</span><span>自</span><span>学</span>
      </p>
      <p className="font-['DejaVu_Sans','Noto_Sans',sans-serif] text-[23px] leading-[28px] font-extralight">zixue.3D66.COM</p>
    </div>
  </div>
);

export default function App() {
  return (
    <div className="relative flex h-screen flex-col overflow-hidden bg-[#383838] font-['Noto_Sans','Noto_Sans_CJK_SC',sans-serif] text-[13px] leading-[18px] text-[#e2e2e2]">
      <Header />
      <Ribbon />
      <FileTabs />
      <Workspace />
      <StatusBar />
      <VideoLogo />
      <BrandCard />
    </div>
  );
}
